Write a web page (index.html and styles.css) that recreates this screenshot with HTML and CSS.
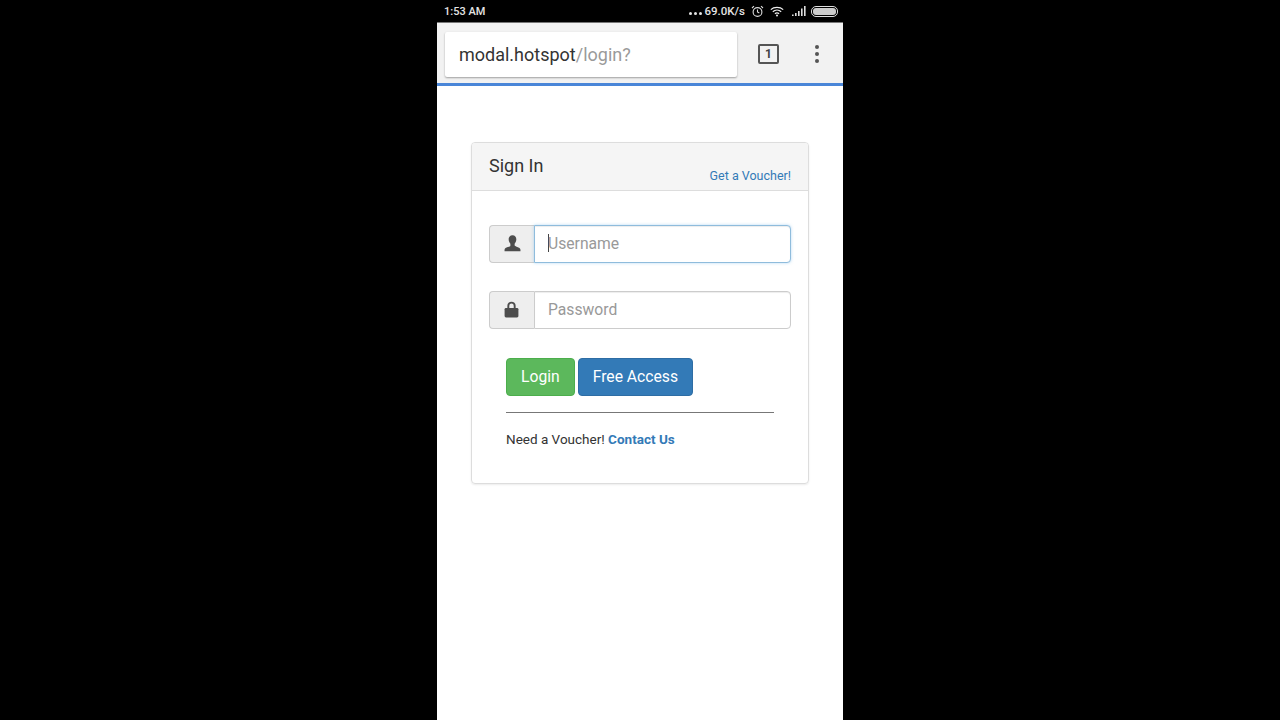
FILE: index.html
```html
<!DOCTYPE html>
<html lang="en">
<head>
<meta charset="utf-8">
<title>Sign In</title>
<link rel="stylesheet" href="styles.css">
</head>
<body>
<main class="phone">
  <div class="status">
    <span class="time">1:53 AM</span>
    <div class="status-right">
      <span class="dots"><i></i><i></i><i></i></span>
      <span class="speed">69.0K/s</span>
      <svg class="ic-alarm" width="13" height="13" viewBox="0 0 13 13" fill="none" stroke="#ddd" stroke-width="1.1"><circle cx="6.5" cy="7" r="4.4"/><path d="M6.5 4.6V7l1.8 1M1 3 3 1.2M12 3 10 1.2"/></svg>
      <svg class="ic-wifi" width="14" height="11" viewBox="0 0 14 11" fill="none" stroke="#eee" stroke-width="1.2"><path d="M.8 3.6C4 .6 10 .6 13.2 3.6M2.8 5.7c2.4-2 6-2 8.4 0M4.9 7.7c1.2-.9 3-.9 4.2 0"/><circle cx="7" cy="9.6" r="1" fill="#eee" stroke="none"/></svg>
      <svg class="ic-signal" width="14" height="10" viewBox="0 0 14 10" fill="#ddd"><rect x="0" y="8.500" width="1.600" height="1.500"/><rect x="3" y="7" width="1.600" height="3"/><rect x="6" y="5" width="1.600" height="5"/><rect x="9" y="2.500" width="1.600" height="7.500"/><rect x="12" y="0" width="1.600" height="10"/></svg>
      <span class="battery"><span class="battery-fill"></span></span>
    </div>
  </div>
  <div class="toolbar">
    <div class="url"><span class="host">modal.hotspot</span><span class="path">/login?</span></div>
    <span class="tabs">1</span>
    <span class="menu"><i></i><i></i><i></i></span>
  </div>
  <div class="page">
    <section class="card">
      <header class="card-head">
        <h1>Sign In</h1>
        <a class="voucher" href="#">Get a Voucher!</a>
      </header>
      <div class="card-body">
        <div class="field">
          <span class="addon">
            <svg width="17" height="17" viewBox="0 0 16 16" fill="#4d4d4d"><path d="M8 .2c2.300 0 3.600 1.700 3.600 3.900 0 1.700-.7 3.200-1.600 4.100v1.500c0 .6 1 1 2.400 1.500 1.800.7 2.900 1.200 3.100 2.700v1.300H.5v-1.300c.2-1.500 1.300-2 3.100-2.700C5 11.200 6 10.800 6 10.200V8.200C5.100 7.300 4.400 5.800 4.400 4.100 4.400 1.900 5.700.2 8 .2z"/></svg>
          </span>
          <div class="control focus"><span class="caret"></span><span class="ph">Username</span></div>
        </div>
        <div class="field">
          <span class="addon">
            <svg class="lock" width="17" height="17" viewBox="0 0 16 16"><path d="M5 7V4.500a3 3 0 0 1 6 0V7" fill="none" stroke="#4d4d4d" stroke-width="1.800"/><rect x="1.500" y="6.500" width="13" height="9" rx="1.300" fill="#4d4d4d"/></svg>
          </span>
          <div class="control"><span class="ph">Password</span></div>
        </div>
        <div class="inner">
          <div class="buttons">
            <button class="btn green" type="button">Login</button>
            <button class="btn blue" type="button">Free Access</button>
          </div>
          <hr>
          <p class="need">Need a Voucher! <a href="#">Contact Us</a></p>
        </div>
      </div>
    </section>
  </div>
</main>
</body>
</html>
```
FILE: styles.css
```css
* { box-sizing: border-box; }
html, body { margin: 0; height: 100%; }
body {
  background: #000;
  display: flex;
  justify-content: center;
  font-family: Roboto, "Liberation Sans", sans-serif;
  color: #333;
  overflow: hidden;
}
.phone {
  width: 406px;
  height: 720px;
  background: #fff;
  display: flex;
  flex-direction: column;
}
.status {
  height: 22px;
  background: #000;
  color: #e4e4e4;
  display: flex;
  align-items: center;
  justify-content: space-between;
  padding: 0 5px 0 7px;
  font-size: 11px;
  font-weight: 500;
}
.status-right { display: flex; align-items: center; }
.dots { display: flex; gap: 2px; margin: 5px 3px 0 0; }
.dots i { display: block; width: 3px; height: 3px; background: #e4e4e4; border-radius: 50%; }
.speed { font-size: 11.500px; margin-right: 6px; }
.ic-alarm { margin-right: 6px; }
.ic-wifi { margin-right: 8px; }
.ic-signal { margin-right: 5px; }
.battery {
  width: 27px;
  height: 11px;
  border: 1px solid #ddd;
  border-radius: 5px;
  padding: 1px;
  display: block;
}
.battery-fill { display: block; height: 100%; background: #ccc; border-radius: 3px; }
.toolbar {
  height: 64px;
  background: #f2f2f2;
  border-top: 1px solid #777;
  border-bottom: 3px solid #4a86d8;
  display: flex;
  align-items: center;
  padding: 2px 0 0 8px;
}
.url {
  width: 292px;
  height: 45px;
  background: #fff;
  border-radius: 2px;
  box-shadow: 0 1px 2px rgba(0,0,0,.35);
  padding-left: 14px;
  font-size: 18px;
  line-height: 45px;
  white-space: nowrap;
}
.host { color: #333; }
.path { color: #9a9a9a; }
.tabs {
  width: 21px;
  height: 20px;
  margin-left: 21px;
  border: 2px solid #555;
  border-radius: 2px;
  color: #444;
  font-size: 12px;
  font-weight: 700;
  line-height: 16px;
  text-align: center;
}
.menu {
  margin-left: 36px;
  display: flex;
  flex-direction: column;
  gap: 3px;
}
.menu i { display: block; width: 4px; height: 4px; background: #555; border-radius: 50%; }
.page {
  flex: 1;
  padding: 56px 34px 0;
}
.card {
  height: 342px;
  border: 1px solid #ddd;
  border-radius: 4px;
  box-shadow: 0 1px 2px rgba(0,0,0,.08);
}
.card-head {
  height: 48px;
  background: #f5f5f5;
  border-bottom: 1px solid #ddd;
  border-radius: 3px 3px 0 0;
  padding: 0 17px;
  display: flex;
  justify-content: space-between;
}
h1 {
  margin: 0;
  font-size: 18px;
  font-weight: 400;
  line-height: 46px;
  color: #333;
}
.voucher {
  font-size: 12.500px;
  line-height: 17px;
  margin-top: 24px;
  color: #337ab7;
  text-decoration: none;
}
.card-body { padding: 34px 17px 0; }
.field { display: flex; height: 38px; margin-bottom: 28px; }
.addon {
  width: 45px;
  background: #eee;
  border: 1px solid #ccc;
  border-right: 0;
  border-radius: 4px 0 0 4px;
  display: flex;
  align-items: center;
  justify-content: center;
  padding-bottom: 2px;
}
.lock { margin-left: -2px; margin-top: 1px; }
.control {
  flex: 1;
  display: flex;
  align-items: center;
  border: 1px solid #ccc;
  border-radius: 0 4px 4px 0;
  padding: 0 0 2px 13px;
  font-size: 15.700px;
  background: #fff;
  box-shadow: inset 0 1px 1px rgba(0,0,0,.075);
}
.control.focus {
  border-color: #8fbcdc;
  box-shadow: inset 0 1px 1px rgba(0,0,0,.075), 0 0 3px rgba(102,175,233,.5);
}
.caret { width: 1px; height: 18px; background: #444; margin-right: -1px; }
.ph { color: #999; }
.inner { padding: 1px 17px 0; }
.buttons { display: flex; gap: 3px; }
.btn {
  height: 38px;
  border: 1px solid;
  border-radius: 4px;
  color: #fff;
  font: 400 15.700px Roboto, "Liberation Sans", sans-serif;
  padding: 0 14px 2px;
}
.green { background: #5cb85c; border-color: #4cae4c; }
.blue { background: #337ab7; border-color: #2e6da4; }
hr { margin: 16px 0 0; border: 0; border-top: 1px solid #777; }
.need { margin: 17px 0 0; font-size: 13.500px; line-height: 18px; color: #333; }
.need a { color: #337ab7; font-weight: 700; text-decoration: none; }
```
